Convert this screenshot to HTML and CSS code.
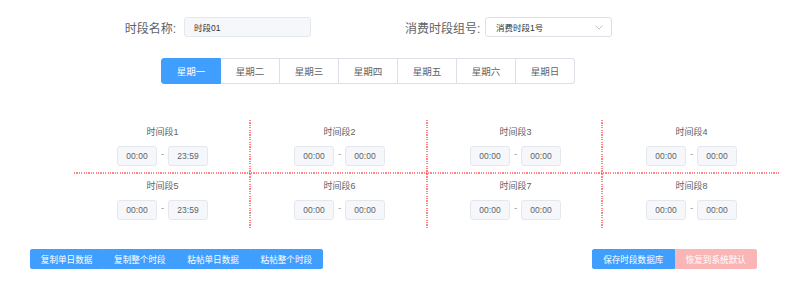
FILE: index.html
```html
<!DOCTYPE html>
<html lang="zh-CN">
<head>
<meta charset="utf-8">
<title>时段设置</title>
<link rel="stylesheet" href="styles.css">
</head>
<body>
<div class="page">
  <div class="form-row">
    <div class="form-item">
      <label class="form-label">时段名称:</label>
      <div class="text-input">时段01</div>
    </div>
    <div class="form-item second">
      <label class="form-label">消费时段组号:</label>
      <div class="select">
        <span>消费时段1号</span>
        <svg class="arrow" width="8" height="5" viewBox="0 0 8 5"><path d="M0.5 0.5 L4 4 L7.5 0.5" fill="none" stroke="#c0c4cc" stroke-width="1"/></svg>
      </div>
    </div>
  </div>

  <div class="tabs">
    <div class="tab active">星期一</div>
    <div class="tab">星期二</div>
    <div class="tab">星期三</div>
    <div class="tab">星期四</div>
    <div class="tab">星期五</div>
    <div class="tab">星期六</div>
    <div class="tab">星期日</div>
  </div>

  <div class="grid">
    <div class="cell r1 c1"><div class="cell-label">时间段1</div><div class="times"><div class="time">00:00</div><span class="dash">-</span><div class="time">23:59</div></div></div>
    <div class="cell r1 c2"><div class="cell-label">时间段2</div><div class="times"><div class="time">00:00</div><span class="dash">-</span><div class="time">00:00</div></div></div>
    <div class="cell r1 c3"><div class="cell-label">时间段3</div><div class="times"><div class="time">00:00</div><span class="dash">-</span><div class="time">00:00</div></div></div>
    <div class="cell r1 c4"><div class="cell-label">时间段4</div><div class="times"><div class="time">00:00</div><span class="dash">-</span><div class="time">00:00</div></div></div>
    <div class="cell c1"><div class="cell-label">时间段5</div><div class="times"><div class="time">00:00</div><span class="dash">-</span><div class="time">23:59</div></div></div>
    <div class="cell c2"><div class="cell-label">时间段6</div><div class="times"><div class="time">00:00</div><span class="dash">-</span><div class="time">00:00</div></div></div>
    <div class="cell c3"><div class="cell-label">时间段7</div><div class="times"><div class="time">00:00</div><span class="dash">-</span><div class="time">00:00</div></div></div>
    <div class="cell c4"><div class="cell-label">时间段8</div><div class="times"><div class="time">00:00</div><span class="dash">-</span><div class="time">00:00</div></div></div>
  </div>

  <div class="actions">
    <div class="btn-group left">
      <button class="btn primary">复制单日数据</button>
      <button class="btn primary">复制整个时段</button>
      <button class="btn primary">粘帖单日数据</button>
      <button class="btn primary">粘帖整个时段</button>
    </div>
    <div class="btn-group right">
      <button class="btn primary wide">保存时段数据库</button>
      <button class="btn danger wide">恢复到系统默认</button>
    </div>
  </div>
</div>
</body>
</html>
```

FILE: styles.css
```css
* { box-sizing: border-box; }
html, body { margin: 0; padding: 0; background: #fff; }
body {
  font-family: "Liberation Sans", "Noto Sans CJK SC", sans-serif;
  color: #606266;
  width: 800px;
  height: 294px;
  overflow: hidden;
}
.page { padding-top: 17px; }

.form-row { display: flex; align-items: center; height: 20px; }
.form-item { display: flex; align-items: center; }
.form-item:first-child { margin-left: 104px; }
.form-item.second { margin-left: 94px; }
.form-label {
  width: 80px;
  text-align: right;
  padding-right: 8px;
  font-size: 12px;
  color: #606266;
  white-space: nowrap;
}
.text-input, .select {
  width: 127px;
  height: 20px;
  border: 1px solid #e4e7ed;
  border-radius: 3px;
  font-size: 8.5px;
  color: #303133;
  padding-left: 9px;
  display: flex;
  align-items: center;
}
.text-input { background: #f5f7fa; }
.select { background: #fff; border-color: #dcdfe6; justify-content: space-between; padding-right: 8px; padding-left: 10px; }
.arrow { display: block; }

.tabs {
  display: flex;
  margin-left: 161px;
  margin-top: 21px;
  width: 414px;
  height: 26px;
}
.tab {
  flex: 1;
  display: flex;
  align-items: center;
  justify-content: center;
  font-size: 9.5px;
  color: #606266;
  border: 1px solid #dcdfe6;
  border-left: none;
}
.tab:first-child { border-left: 1px solid #409eff; border-radius: 3px 0 0 3px; }
.tab:last-child { border-radius: 0 3px 3px 0; }
.tab.active { background: #409eff; border-color: #409eff; color: #fff; }

.grid {
  display: grid;
  grid-template-columns: 177px 177px 175px 177px;
  margin-left: 74px;
  width: 706px;
  margin-top: 36px;
}
.cell {
  height: 54px;
  padding-top: 6px;
  display: flex;
  flex-direction: column;
  align-items: center;
  background-repeat: no-repeat;
}
.cell.r1 {
  background-image: repeating-linear-gradient(to right, rgba(255,30,30,0.55) 0 1.2px, rgba(255,255,255,0) 1.2px 2.4px);
  background-size: 100% 2px;
  background-position: left bottom;
}
.cell.c1:not(.r1), .cell.c2:not(.r1), .cell.c3:not(.r1) {
  background-image: repeating-linear-gradient(to bottom, rgba(255,30,30,0.55) 0 1.2px, rgba(255,255,255,0) 1.2px 2.4px);
  background-size: 2px 100%;
  background-position: right top;
}
.cell.r1.c1, .cell.r1.c2, .cell.r1.c3 {
  background-image:
    repeating-linear-gradient(to right, rgba(255,30,30,0.55) 0 1.2px, rgba(255,255,255,0) 1.2px 2.4px),
    repeating-linear-gradient(to bottom, rgba(255,30,30,0.55) 0 1.2px, rgba(255,255,255,0) 1.2px 2.4px);
  background-size: 100% 2px, 2px 100%;
  background-position: left bottom, right top;
}
.cell-label { font-size: 9px; line-height: 12px; height: 12px; color: #606266; }
.times { display: flex; align-items: center; margin-top: 8px; }
.time {
  width: 40px;
  height: 20px;
  background: #f5f7fa;
  border: 1px solid #e4e7ed;
  border-radius: 3px;
  font-size: 8.5px;
  color: #606266;
  display: flex;
  align-items: center;
  justify-content: center;
}
.dash {
  width: 11px;
  text-align: center;
  font-size: 8px;
  color: #606266;
  position: relative;
  top: -3px;
}

.actions {
  display: flex;
  justify-content: space-between;
  margin-top: 21px;
  padding-left: 30px;
  padding-right: 43px;
}
.btn-group { display: flex; }
.btn {
  height: 20px;
  width: 73.25px;
  border: 1px solid #409eff;
  background: #409eff;
  color: #fff;
  font-family: "Liberation Sans", "Noto Sans CJK SC", sans-serif;
  font-size: 8.6px;
  padding: 0;
  margin: 0;
  border-radius: 0;
}
.btn.wide { width: 82.5px; }
.btn-group .btn:first-child { border-radius: 2px 0 0 2px; }
.btn-group .btn:last-child { border-radius: 0 2px 2px 0; }
.btn.danger { background: #fab6b6; border-color: #fab6b6; color: #fff; }
```
